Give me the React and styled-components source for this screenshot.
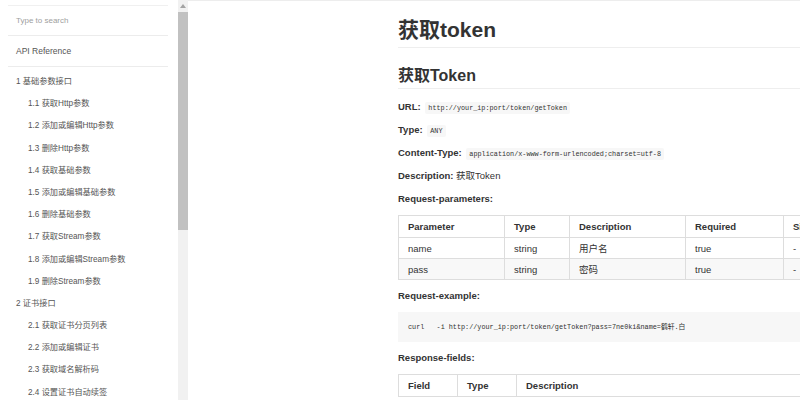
import React from 'react';
import styled, { createGlobalStyle } from 'styled-components';

const GlobalStyle = createGlobalStyle`
  html, body {
    margin: 0;
    padding: 0;
    height: 100%;
    overflow: hidden;
    background: #fff;
    font-family: "Liberation Sans", Arial, "Noto Sans CJK SC", sans-serif;
    color: #333;
  }
  #root { height: 100%; }
`;

const Page = styled.div`
  display: flex;
  height: 400px;
  width: 800px;
`;

const Sidebar = styled.nav`
  width: 188px;
  flex: none;
  height: 100%;
  display: flex;
`;

const SideBody = styled.div`
  width: 178px;
  height: 100%;
  overflow: hidden;
  padding-top: 5px;
  box-sizing: border-box;
`;

// fake scrollbar, the sidebar is scrolled content
const ScrollTrack = styled.div`
  width: 10px;
  height: 100%;
  background: #f1f1f1;
  display: flex;
  flex-direction: column;
`;

const ScrollArrow = styled.div`
  height: 12px;
  display: flex;
  align-items: center;
  justify-content: center;

  &::before {
    content: '';
    border-left: 3px solid transparent;
    border-right: 3px solid transparent;
    border-bottom: 4px solid #a3a3a3;
  }
`;

const ScrollThumb = styled.div`
  height: 218px;
  background: #c1c1c1;
`;

const SideList = styled.ul`
  list-style: none;
  margin: 0 10px 0 8px;
  padding: 0;
`;

const Search = styled.li`
  border-top: 1px solid #f0f0f0;
  border-bottom: 1px solid #ececec;
  height: 29px;
  display: flex;
  align-items: center;
  padding-left: 8px;
  font-size: 8px;
  color: #a0a0a0;
`;

const TopLink = styled.li`
  border-bottom: 1px solid #ececec;
  height: 30px;
  display: flex;
  align-items: center;
  padding-left: 8px;
  font-size: 8.5px;
  color: #555;
`;

const Chapters = styled.ul`
  list-style: none;
  margin: 0;
  padding: 4px 0 0 0;
`;

const Item = styled.li`
  line-height: 22.2px;
  height: 22.2px;
  padding-left: ${p => (p.$sub ? 20 : 8)}px;
  font-size: 8.2px;
  color: #555;
  white-space: nowrap;
`;

const Main = styled.main`
  flex: 1;
  min-width: 0;
  height: 100%;
  overflow: hidden;
  border-top: 1px solid #ededed;
  box-sizing: border-box;
`;

const Content = styled.section`
  width: 600px;
  padding: 16px 0 0 210px;
  font-size: 9.5px;
`;

const H1 = styled.h1`
  margin: 0;
  font-size: 21px;
  line-height: 26px;
  font-weight: 700;
  padding-bottom: 4px;
  border-bottom: 1px solid #eee;
  color: #333;
`;

const H2 = styled.h2`
  margin: 18px 0 0;
  font-size: 16px;
  line-height: 20px;
  font-weight: 700;
  padding-bottom: 2px;
  border-bottom: 1px solid #eee;
  color: #333;
`;

const Para = styled.p`
  margin: ${p => (p.$first ? 11 : 9)}px 0 0;
  height: 14px;
  line-height: 14px;
  font-size: 9.5px;
  color: #333;

  strong {
    font-weight: 700;
  }
`;

const Code = styled.code`
  font-family: "Liberation Mono", "DejaVu Sans Mono", monospace;
  font-size: 6.8px;
  line-height: 1;
  background: #f7f7f7;
  padding: 2px 3px;
  border-radius: 2px;
  color: #333;
  margin-left: 2px;
`;

const Table = styled.table`
  border-collapse: collapse;
  margin: 9px 0 8px;
  font-size: 9.5px;
  table-layout: fixed;
`;

const Th = styled.th`
  text-align: left;
  font-weight: 700;
  border: 1px solid #ddd;
  height: 22px;
  padding: 0 9px;
  box-sizing: border-box;
  white-space: nowrap;
`;

const Row = styled.tr`
  background: ${p => (p.$alt ? '#f8f8f8' : '#fff')};
`;

const Td = styled.td`
  border: 1px solid #ddd;
  height: 21px;
  box-sizing: border-box;
  padding: 0 9px;
  color: #333;
  white-space: nowrap;
`;

const Pre = styled.pre`
  margin: 9px 0 0;
  background: #f7f7f7;
  padding: 8px 10px;
  width: 600px;
  font-family: "Liberation Mono", "DejaVu Sans Mono", "Noto Sans CJK SC", monospace;
  font-size: 6.8px;
  line-height: 14px;
  height: 14px;
  color: #333;
  white-space: pre;
`;

const subItems = [
  ['1 基础参数接口', false],
  ['1.1 获取Http参数', true],
  ['1.2 添加或编辑Http参数', true],
  ['1.3 删除Http参数', true],
  ['1.4 获取基础参数', true],
  ['1.5 添加或编辑基础参数', true],
  ['1.6 删除基础参数', true],
  ['1.7 获取Stream参数', true],
  ['1.8 添加或编辑Stream参数', true],
  ['1.9 删除Stream参数', true],
  ['2 证书接口', false],
  ['2.1 获取证书分页列表', true],
  ['2.2 添加或编辑证书', true],
  ['2.3 获取域名解析码', true],
  ['2.4 设置证书自动续签', true],
];

const params = [
  ['name', 'string', '用户名', 'true', '-'],
  ['pass', 'string', '密码', 'true', '-'],
];

export default function App() {
  return (
    <>
      <GlobalStyle />
      <Page>
        <Sidebar>
          <SideBody>
            <SideList>
              <Search>Type to search</Search>
              <TopLink>API Reference</TopLink>
              <li>
                <Chapters>
                  {subItems.map(([label, sub]) => (
                    <Item key={label} $sub={sub}>
                      {label}
                    </Item>
                  ))}
                </Chapters>
              </li>
            </SideList>
          </SideBody>
          <ScrollTrack>
            <ScrollArrow />
            <ScrollThumb />
          </ScrollTrack>
        </Sidebar>

        <Main>
          <Content>
            <H1>获取token</H1>
            <H2>获取Token</H2>
            <Para $first>
              <strong>URL:</strong> <Code>http://your_ip:port/token/getToken</Code>
            </Para>
            <Para>
              <strong>Type:</strong> <Code>ANY</Code>
            </Para>
            <Para>
              <strong>Content-Type:</strong>{' '}
              <Code>application/x-www-form-urlencoded;charset=utf-8</Code>
            </Para>
            <Para>
              <strong>Description:</strong> 获取Token
            </Para>
            <Para>
              <strong>Request-parameters:</strong>
            </Para>
            <Table>
              <colgroup>
                <col style={{ width: 106 }} />
                <col style={{ width: 65 }} />
                <col style={{ width: 116 }} />
                <col style={{ width: 98 }} />
                <col style={{ width: 90 }} />
              </colgroup>
              <thead>
                <tr>
                  <Th>Parameter</Th>
                  <Th>Type</Th>
                  <Th>Description</Th>
                  <Th>Required</Th>
                  <Th>Since</Th>
                </tr>
              </thead>
              <tbody>
                {params.map((r, i) => (
                  <Row key={r[0]} $alt={i % 2 === 1}>
                    {r.map((c, j) => (
                      <Td key={j}>{c}</Td>
                    ))}
                  </Row>
                ))}
              </tbody>
            </Table>
            <Para>
              <strong>Request-example:</strong>
            </Para>
            <Pre>{'curl   -i http://your_ip:port/token/getToken?pass=7ne0ki&name=鹤轩.白'}</Pre>
            <Para>
              <strong>Response-fields:</strong>
            </Para>
            <Table>
              <colgroup>
                <col style={{ width: 59 }} />
                <col style={{ width: 59 }} />
                <col style={{ width: 300 }} />
              </colgroup>
              <thead>
                <tr>
                  <Th>Field</Th>
                  <Th>Type</Th>
                  <Th>Description</Th>
                </tr>
              </thead>
            </Table>
          </Content>
        </Main>
      </Page>
    </>
  );
}
